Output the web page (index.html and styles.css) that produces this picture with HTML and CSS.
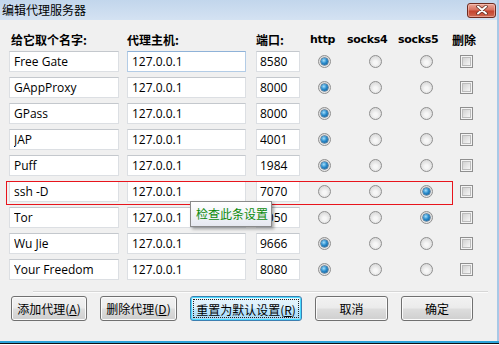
FILE: index.html
```html
<!DOCTYPE html>
<html>
<head>
  <title>编辑代理服务器</title>
  <link rel="stylesheet" href="styles.css">
</head>
<body>
  <div class="window">
    <div class="titlebar">
      <span class="title">编辑代理服务器</span>
      <span class="close">
        <svg width="14" height="10" viewBox="0 0 14 10"><path d="M3 1.5 L11 8.5 M11 1.5 L3 8.5" stroke="#5a2a20" stroke-width="3.4" stroke-linecap="round"/><path d="M3 1.5 L11 8.5 M11 1.5 L3 8.5" stroke="#fff" stroke-width="2" stroke-linecap="round"/></svg>
      </span>
    </div>
    <div class="content">
      <div class="row head">
        <span>给它取个名字:</span>
        <span>代理主机:</span>
        <span>端口:</span>
        <span class="latin">http</span>
        <span class="latin">socks4</span>
        <span class="latin">socks5</span>
        <span>删除</span>
      </div>

      <div class="row">
        <input class="name" type="text" value="Free Gate">
        <input class="host hover" type="text" value="127.0.0.1">
        <input class="port" type="text" value="8580">
        <input class="radio near" type="radio" name="p1" checked>
        <input class="radio far" type="radio" name="p1">
        <input class="radio far" type="radio" name="p1">
        <input class="check" type="checkbox">
      </div>
      <div class="row">
        <input class="name" type="text" value="GAppProxy">
        <input class="host" type="text" value="127.0.0.1">
        <input class="port" type="text" value="8000">
        <input class="radio near" type="radio" name="p2" checked>
        <input class="radio far" type="radio" name="p2">
        <input class="radio far" type="radio" name="p2">
        <input class="check" type="checkbox">
      </div>
      <div class="row">
        <input class="name" type="text" value="GPass">
        <input class="host" type="text" value="127.0.0.1">
        <input class="port" type="text" value="8000">
        <input class="radio near" type="radio" name="p3" checked>
        <input class="radio far" type="radio" name="p3">
        <input class="radio far" type="radio" name="p3">
        <input class="check" type="checkbox">
      </div>
      <div class="row">
        <input class="name" type="text" value="JAP">
        <input class="host" type="text" value="127.0.0.1">
        <input class="port" type="text" value="4001">
        <input class="radio near" type="radio" name="p4" checked>
        <input class="radio far" type="radio" name="p4">
        <input class="radio far" type="radio" name="p4">
        <input class="check" type="checkbox">
      </div>
      <div class="row">
        <input class="name" type="text" value="Puff">
        <input class="host" type="text" value="127.0.0.1">
        <input class="port" type="text" value="1984">
        <input class="radio near" type="radio" name="p5" checked>
        <input class="radio far" type="radio" name="p5">
        <input class="radio far" type="radio" name="p5">
        <input class="check" type="checkbox">
      </div>
      <div class="row">
        <input class="name" type="text" value="ssh -D">
        <input class="host" type="text" value="127.0.0.1">
        <input class="port" type="text" value="7070">
        <input class="radio near" type="radio" name="p6">
        <input class="radio far" type="radio" name="p6">
        <input class="radio far" type="radio" name="p6" checked>
        <input class="check" type="checkbox">
        <div class="mark"></div>
        <div class="tip">检查此条设置</div>
      </div>
      <div class="row">
        <input class="name" type="text" value="Tor">
        <input class="host" type="text" value="127.0.0.1">
        <input class="port" type="text" value="9050">
        <input class="radio near" type="radio" name="p7">
        <input class="radio far" type="radio" name="p7">
        <input class="radio far" type="radio" name="p7" checked>
        <input class="check" type="checkbox">
      </div>
      <div class="row">
        <input class="name" type="text" value="Wu Jie">
        <input class="host" type="text" value="127.0.0.1">
        <input class="port" type="text" value="9666">
        <input class="radio near" type="radio" name="p8" checked>
        <input class="radio far" type="radio" name="p8">
        <input class="radio far" type="radio" name="p8">
        <input class="check" type="checkbox">
      </div>
      <div class="row">
        <input class="name" type="text" value="Your Freedom">
        <input class="host" type="text" value="127.0.0.1">
        <input class="port" type="text" value="8080">
        <input class="radio near" type="radio" name="p9" checked>
        <input class="radio far" type="radio" name="p9">
        <input class="radio far" type="radio" name="p9">
        <input class="check" type="checkbox">
      </div>

      <div class="sep"></div>

      <div class="buttons">
        <button class="b1">添加代理(<u>A</u>)</button>
        <button class="b2">删除代理(<u>D</u>)</button>
        <button class="b3 focus"><span class="ring">重置为默认设置(<u>R</u>)</span></button>
        <button class="b4">取消</button>
        <button class="b5">确定</button>
      </div>
    </div>
    <div class="frame-bottom"></div>
  </div>
</body>
</html>
```

FILE: styles.css
```css
/* page and window frame */
body {
  margin: 0;
  width: 499px;
  height: 345px;
  overflow: hidden;
  font-family: "Open Sans", "Noto Sans CJK SC", sans-serif;
  font-size: 12px;
  color: #000;
  background: #fff;
}
.window {
  display: flex;
  flex-direction: column;
  height: 345px;
}
.titlebar {
  height: 20px;
  flex: 0 0 20px;
  display: flex;
  align-items: center;
  justify-content: space-between;
  background: linear-gradient(#c2d6ec, #d4e2f2);
  border-right: 2px solid #a8c8e6;
}
.title {
  margin-left: 2px;
  font-family: "Noto Sans CJK SC", sans-serif;
  font-size: 12px;
  line-height: 14px;
}
.close {
  display: flex;
  align-items: center;
  justify-content: center;
  width: 27px;
  height: 13px;
  margin-right: 1px;
  border: 1px solid #6e2b20;
  border-radius: 3px;
  background: linear-gradient(#eaa89a, #d7715f 45%, #c5442e 55%, #cf6a52);
  box-shadow: inset 0 0 0 1px rgba(255, 210, 200, 0.5);
}

/* dialog body */
.content {
  flex: 1;
  position: relative;
  background: #f0f0f0;
  border-right: 2px solid #a8c8e6;
  padding-top: 12px;
}
.row {
  position: relative;
  display: grid;
  grid-template-columns: 118px 129px 54px 37px 51px 54px 40px;
  align-items: center;
  padding-left: 9px;
  height: 21px;
  margin-bottom: 5px;
}
.row.head {
  height: 16px;
  margin-bottom: 3px;
  font-family: "Noto Sans CJK SC", sans-serif;
  font-weight: bold;
  line-height: 16px;
}
.row.head span:first-child {
  margin-left: 2px;
}
.row.head .latin {
  font-family: "DejaVu Sans", sans-serif;
  font-size: 11px;
  letter-spacing: -0.3px;
}

/* text boxes */
input[type="text"] {
  box-sizing: border-box;
  height: 21px;
  margin: 0;
  padding: 0 0 0 4px;
  border: 1px solid #dcdfe3;
  border-top-color: #c4c8cd;
  background: #fff;
  font-family: "Open Sans", sans-serif;
  font-size: 12px;
  color: #000;
  outline: none;
}
input.name { width: 110px; }
input.host { width: 119px; }
input.port { width: 44px; padding-left: 3px; }
input.hover {
  border-color: #b3cce6;
  border-top-color: #8fb2d8;
}

/* radio buttons and check boxes */
.radio, .check {
  appearance: none;
  -webkit-appearance: none;
  box-sizing: border-box;
  width: 13px;
  height: 13px;
  margin: 0;
  border: 1px solid #8f8f8f;
  position: relative;
}
.radio {
  border-radius: 50%;
  background: radial-gradient(circle at 50% 60%, #f7f7f7 20%, #e4e4e4 55%, #cfcfcf);
}
.radio.near { margin-left: 8px; }
.radio.far { margin-left: 22px; }
.radio:checked::after {
  content: "";
  position: absolute;
  left: 2px;
  top: 2px;
  width: 7px;
  height: 7px;
  border-radius: 50%;
  background: radial-gradient(circle at 40% 35%, #a7e0fb, #2a8ccd 45%, #0b4f86);
  box-shadow: 0 0 0 0.5px #0f3e66;
}
.check {
  margin-left: 8px;
  background: #f4f4f4;
}
.check::after {
  content: "";
  position: absolute;
  left: 1px;
  top: 1px;
  width: 9px;
  height: 9px;
  background: linear-gradient(135deg, #d2d2d2, #f6f6f6);
  border: 0.5px solid #bcbcbc;
  box-sizing: border-box;
}

/* highlighted row and its tooltip */
.mark {
  position: absolute;
  left: 6px;
  top: 0;
  width: 447px;
  height: 24px;
  border: 1px solid #e8141c;
  box-sizing: border-box;
  pointer-events: none;
}
.tip {
  position: absolute;
  left: 190px;
  top: 20px;
  z-index: 2;
  box-sizing: border-box;
  width: 82px;
  height: 26px;
  padding: 4px 0 0 5px;
  border: 1px solid #8a8a8a;
  background: linear-gradient(#ffffff, #e6e8f0);
  box-shadow: 2px 2px 3px rgba(0, 0, 0, 0.35);
  color: #0a8a0a;
  font-family: "Noto Sans CJK SC", sans-serif;
  font-size: 12px;
  line-height: 16px;
  white-space: nowrap;
}

/* separator and buttons */
.sep {
  margin: 11px 0 0 33px;
  width: 455px;
  height: 1px;
  background: #d6d6d6;
  border-bottom: 1px solid #fcfcfc;
}
.buttons {
  display: flex;
  gap: 13px;
  padding: 3px 0 0 11px;
}
button {
  box-sizing: border-box;
  height: 25px;
  margin: 0;
  padding: 0;
  border: 1px solid #707070;
  border-radius: 3px;
  background: linear-gradient(#f2f2f2, #ebebeb 48%, #dddddd 52%, #cfcfcf);
  box-shadow: inset 0 0 0 1px #fbfbfb;
  font-family: "Noto Sans CJK SC", sans-serif;
  font-size: 12px;
  color: #000;
}
button u { text-underline-offset: 1px; }
.b1 { width: 76px; }
.b2 { width: 77px; }
.b3 { width: 112px; }
.b4 { width: 73px; }
.b5 { width: 72px; }
button.focus {
  border-color: #3c7fb1;
  background: linear-gradient(#eaf6fd, #d9f0fc 48%, #bee6fd 52%, #a7d9f5);
  box-shadow: inset 0 0 0 1px #48dbff;
  padding: 2px;
}
.ring {
  display: block;
  height: 19px;
  line-height: 19px;
  border: 1px dotted #222;
  box-sizing: border-box;
}

.frame-bottom {
  flex: 0 0 4px;
  height: 4px;
  background: linear-gradient(#2aa3d9 0, #2aa3d9 2px, #111 2px, #111 3px, #fff 3px);
}
```
